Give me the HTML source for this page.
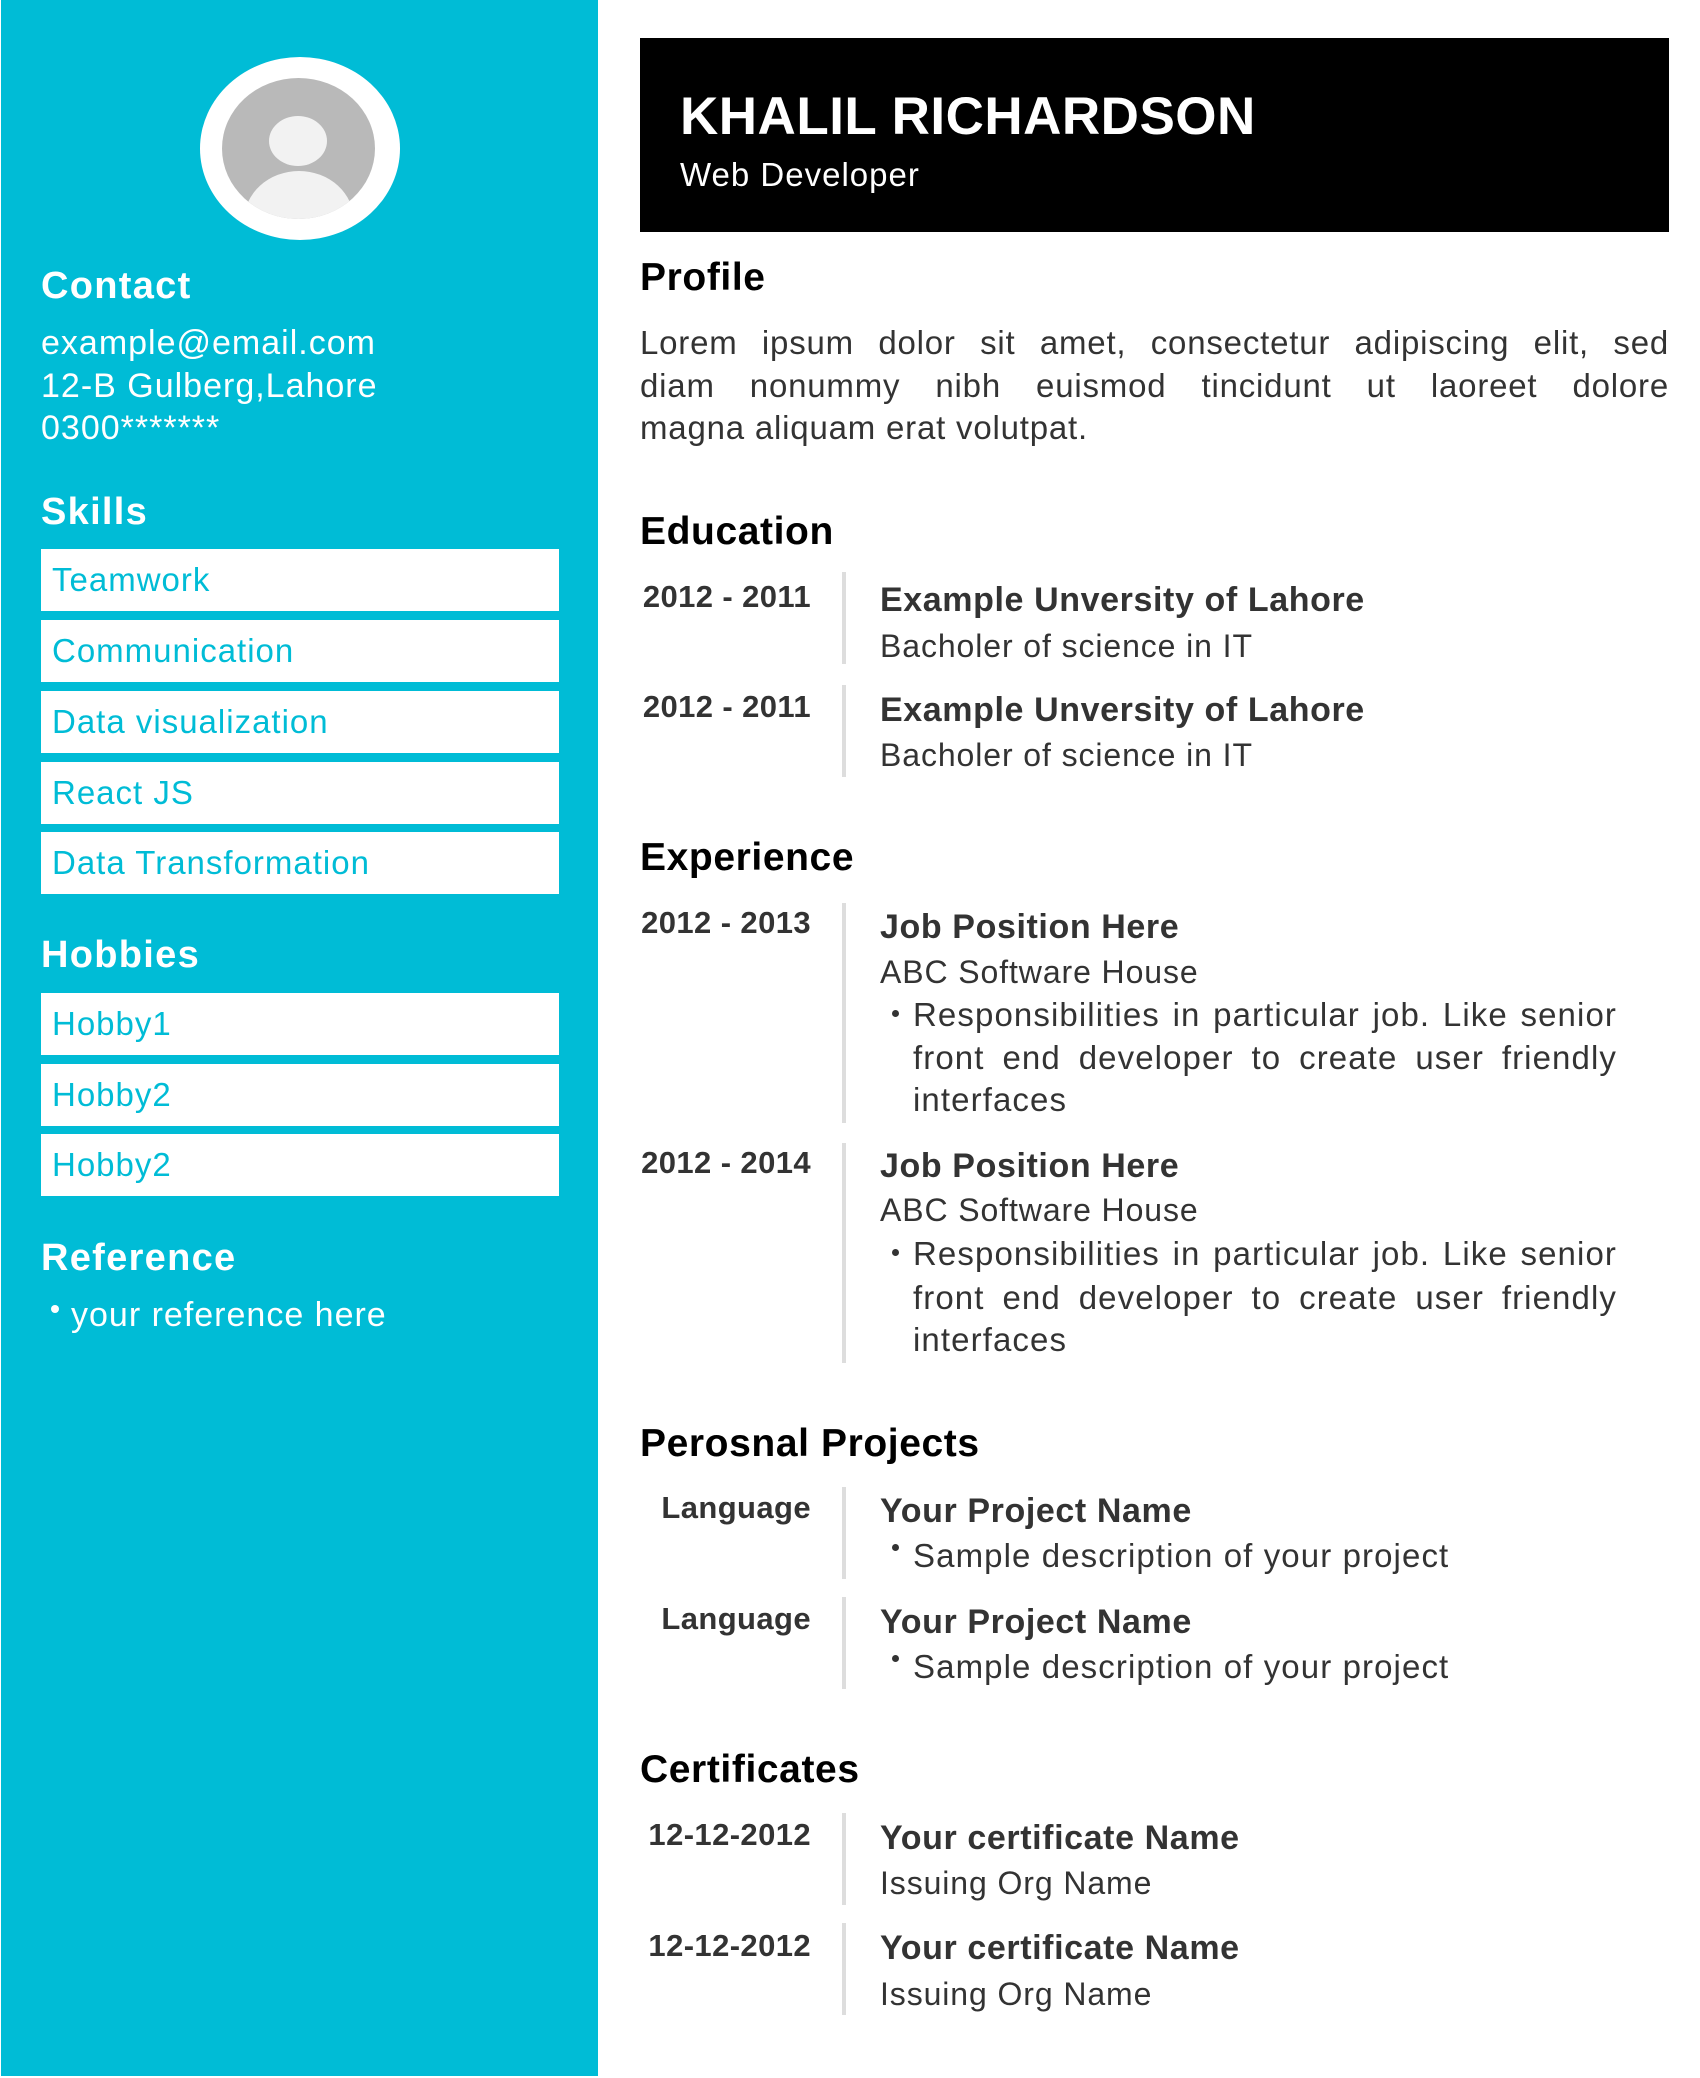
<!DOCTYPE html>
<html><head><meta charset="utf-8"><style>
*{margin:0;padding:0;box-sizing:border-box}
body{width:1700px;height:2078px;background:#fff;position:relative;overflow:hidden;font-family:"Liberation Sans",sans-serif;color:#333}
.a{position:absolute;white-space:nowrap;line-height:40px}
#side{position:absolute;left:1px;top:0;width:597px;height:2076px;background:#00bcd6}
.sh{color:#fff;font-weight:bold;font-size:38px;left:41px;letter-spacing:1.3px}
.sw{color:#fff;font-size:34px;left:41px;letter-spacing:1px}
.box{position:absolute;left:41px;width:518px;height:62px;background:#fff;color:#00bcd6;font-size:33px;line-height:62px;padding-left:11px;letter-spacing:1px}
.h{color:#000;font-weight:bold;font-size:39px;left:640px;letter-spacing:.6px}
.p{font-size:33px;left:640px;width:1029px;text-align:justify;text-align-last:justify;color:#333;letter-spacing:.8px}
.d{font-weight:bold;font-size:31px;right:889px;text-align:right;letter-spacing:.4px}
.t{font-weight:bold;font-size:34px;left:880px;letter-spacing:.6px}
.s{font-size:32px;left:880px;letter-spacing:.9px}
.b{font-size:33px;left:913px;width:704px;letter-spacing:1.1px}
.j{text-align:justify;text-align-last:justify}
.dot{position:absolute;width:7px;height:7px;border-radius:50%;background:#333;left:892px}
.v{position:absolute;left:842px;width:4px;background:#ddd}
</style></head><body>
<div id="side"></div>
<div style="position:absolute;left:200px;top:57px;width:200px;height:183px;border-radius:50%;background:#fff"></div>
<div style="position:absolute;left:222px;top:78px;width:153px;height:141px;border-radius:50%;background:#b9b9b9;overflow:hidden">
 <div style="position:absolute;left:47px;top:38px;width:58px;height:50px;border-radius:50%;background:#f2f2f2"></div>
 <div style="position:absolute;left:22px;top:93px;width:110px;height:100px;border-radius:50%;background:#f2f2f2"></div>
</div>
<div class="a sh" style="top:266px">Contact</div>
<div class="a sw" style="top:323px">example@email.com</div>
<div class="a sw" style="top:366px">12-B Gulberg,Lahore</div>
<div class="a sw" style="top:408px">0300*******</div>
<div class="a sh" style="top:492px">Skills</div>
<div class="box" style="top:549px">Teamwork</div>
<div class="box" style="top:620px">Communication</div>
<div class="box" style="top:691px">Data visualization</div>
<div class="box" style="top:762px">React JS</div>
<div class="box" style="top:832px">Data Transformation</div>
<div class="a sh" style="top:935px">Hobbies</div>
<div class="box" style="top:993px">Hobby1</div>
<div class="box" style="top:1064px">Hobby2</div>
<div class="box" style="top:1134px">Hobby2</div>
<div class="a sh" style="top:1238px">Reference</div>
<div style="position:absolute;left:51px;top:1305px;width:8px;height:8px;border-radius:50%;background:#fff"></div>
<div class="a sw" style="top:1295px;left:71px">your reference here</div>

<div style="position:absolute;left:640px;top:38px;width:1029px;height:194px;background:#000"></div>
<div class="a" style="left:680px;top:91px;font-size:53px;line-height:52px;font-weight:bold;color:#fff;letter-spacing:.5px">KHALIL RICHARDSON</div>
<div class="a" style="left:680px;top:155px;font-size:33px;color:#fff;letter-spacing:1px">Web Developer</div>

<div class="a h" style="top:258px">Profile</div>
<div class="a p" style="top:323px">Lorem ipsum dolor sit amet, consectetur adipiscing elit, sed</div>
<div class="a p" style="top:366px">diam nonummy nibh euismod tincidunt ut laoreet dolore</div>
<div class="a" style="top:408px;left:640px;font-size:33px;letter-spacing:.8px">magna aliquam erat volutpat.</div>

<div class="a h" style="top:512px">Education</div>
<div class="v" style="top:572px;height:92px"></div>
<div class="a d" style="top:577px">2012 - 2011</div>
<div class="a t" style="top:580px">Example Unversity of Lahore</div>
<div class="a s" style="top:626px">Bacholer of science in IT</div>
<div class="v" style="top:685px;height:92px"></div>
<div class="a d" style="top:687px">2012 - 2011</div>
<div class="a t" style="top:690px">Example Unversity of Lahore</div>
<div class="a s" style="top:735px">Bacholer of science in IT</div>

<div class="a h" style="top:838px">Experience</div>
<div class="v" style="top:903px;height:220px"></div>
<div class="a d" style="top:903px">2012 - 2013</div>
<div class="a t" style="top:907px">Job Position Here</div>
<div class="a s" style="top:952px">ABC Software House</div>
<div class="dot" style="top:1010px"></div>
<div class="a b j" style="top:995px">Responsibilities in particular job. Like senior</div>
<div class="a b j" style="top:1038px">front end developer to create user friendly</div>
<div class="a b" style="top:1080px">interfaces</div>
<div class="v" style="top:1143px;height:220px"></div>
<div class="a d" style="top:1143px">2012 - 2014</div>
<div class="a t" style="top:1146px">Job Position Here</div>
<div class="a s" style="top:1190px">ABC Software House</div>
<div class="dot" style="top:1249px"></div>
<div class="a b j" style="top:1234px">Responsibilities in particular job. Like senior</div>
<div class="a b j" style="top:1278px">front end developer to create user friendly</div>
<div class="a b" style="top:1320px">interfaces</div>

<div class="a h" style="top:1424px">Perosnal Projects</div>
<div class="v" style="top:1487px;height:92px"></div>
<div class="a d" style="top:1488px">Language</div>
<div class="a t" style="top:1491px">Your Project Name</div>
<div class="dot" style="top:1544px"></div>
<div class="a b" style="top:1536px">Sample description of your project</div>
<div class="v" style="top:1597px;height:92px"></div>
<div class="a d" style="top:1599px">Language</div>
<div class="a t" style="top:1602px">Your Project Name</div>
<div class="dot" style="top:1655px"></div>
<div class="a b" style="top:1647px">Sample description of your project</div>

<div class="a h" style="top:1750px">Certificates</div>
<div class="v" style="top:1813px;height:92px"></div>
<div class="a d" style="top:1815px">12-12-2012</div>
<div class="a t" style="top:1818px">Your certificate Name</div>
<div class="a s" style="top:1863px">Issuing Org Name</div>
<div class="v" style="top:1923px;height:92px"></div>
<div class="a d" style="top:1926px">12-12-2012</div>
<div class="a t" style="top:1928px">Your certificate Name</div>
<div class="a s" style="top:1974px">Issuing Org Name</div>
</body></html>
